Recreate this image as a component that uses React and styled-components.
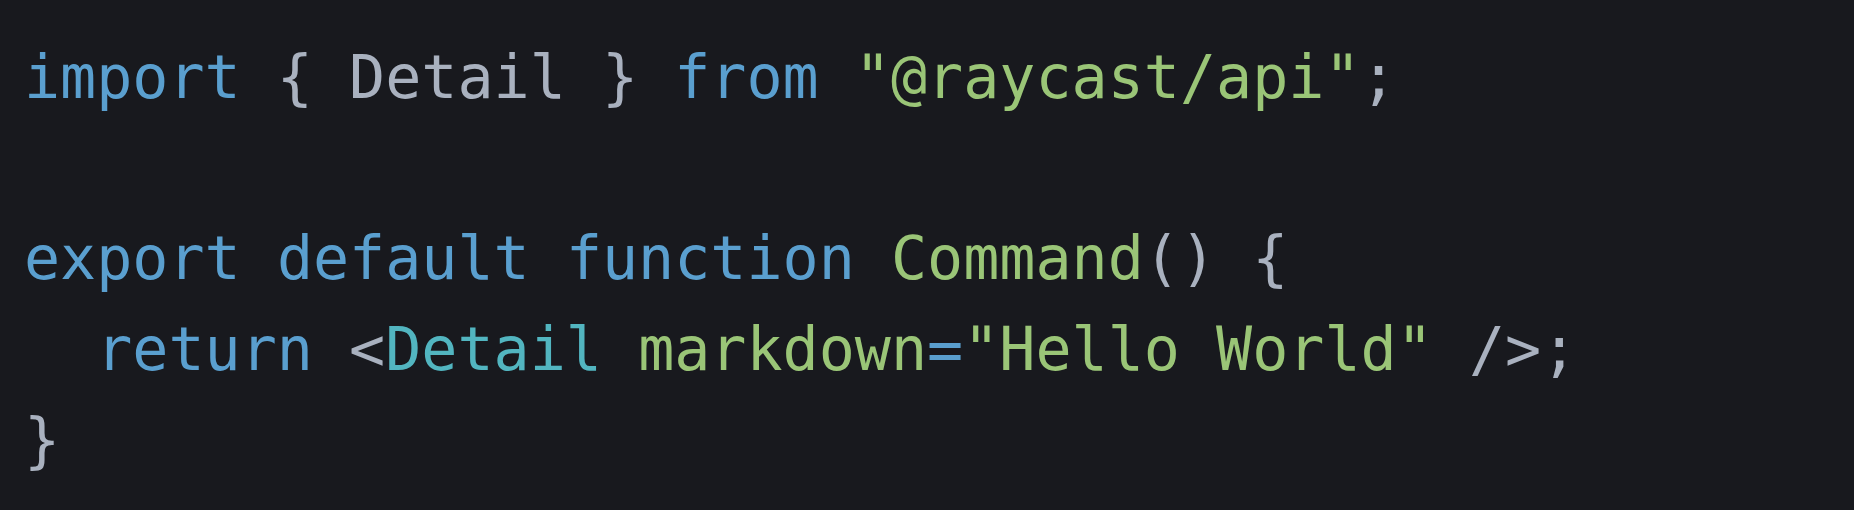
import React from 'react'
import styled, {createGlobalStyle} from 'styled-components'

const Global = createGlobalStyle`
    html, body {
        margin: 0;
        padding: 0;
        background: #18191e;
    }
`

const colores = {
    keyword: '#5a9fcf',
    plain: '#a9b1bf',
    string: '#9ac577',
    tag: '#52b5c0',
}

const Editor = styled.pre`
    margin: 0;
    width: 1854px;
    height: 510px;
    box-sizing: border-box;
    padding: 32px 0 0 24px;
    background: #18191e;
    font-family: "DejaVu Sans Mono", monospace;
    font-size: 60px;
    line-height: 90.7px;
    color: ${colores.plain};
    overflow: hidden;
`

const Linea = styled.div`
    height: 90.7px;
    white-space: pre;
`

const Token = styled.span`
    color: ${props => colores[props.kind] || colores.plain};
`

const codigo = [
    [['keyword', 'import'], ['plain', ' { Detail } '], ['keyword', 'from'], ['plain', ' '], ['string', '"@raycast/api"'], ['plain', ';']],
    [],
    [['keyword', 'export'], ['plain', ' '], ['keyword', 'default'], ['plain', ' '], ['keyword', 'function'], ['plain', ' '], ['string', 'Command'], ['plain', '() {']],
    [['plain', '  '], ['keyword', 'return'], ['plain', ' <'], ['tag', 'Detail'], ['plain', ' '], ['string', 'markdown'], ['keyword', '='], ['string', '"Hello World"'], ['plain', ' />;']],
    [['plain', '}']],
]

const App = () => {
    return (
        <>
            <Global />
            <Editor>
                {codigo.map((linea, i) => (
                    <Linea key={i}>
                        {linea.map(([kind, text], j) => (
                            <Token key={j} kind={kind}>{text}</Token>
                        ))}
                    </Linea>
                ))}
            </Editor>
        </>
    )
}

export default App
